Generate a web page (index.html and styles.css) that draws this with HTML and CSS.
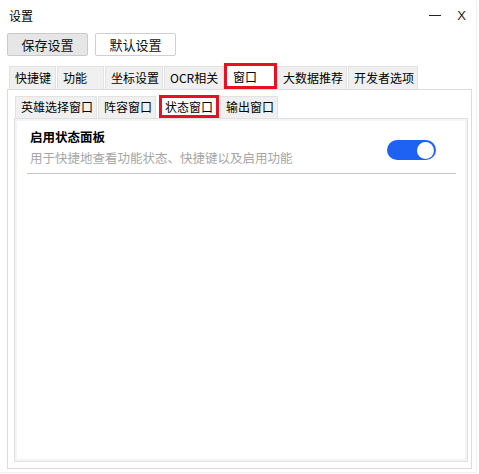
FILE: index.html
```html
<!DOCTYPE html>
<html lang="zh-CN">
<head>
  <meta charset="UTF-8" />
  <title>设置</title>
  <link rel="stylesheet" href="styles.css">
</head>
<body>
  <div class="window">
    <div class="titlebar">
      <span class="title">设置</span>
      <div class="controls">
        <span class="ctl-min"></span>
        <span class="ctl-close">X</span>
      </div>
    </div>

    <div class="toolbar">
      <button type="button" class="btn btn-primary">保存设置</button>
      <button type="button" class="btn">默认设置</button>
    </div>

    <div class="tabs">
      <div class="tab">快捷键</div>
      <div class="tab">功能</div>
      <div class="tab">坐标设置</div>
      <div class="tab tab-wide">OCR相关</div>
      <div class="tab active">窗口</div>
      <div class="tab">大数据推荐</div>
      <div class="tab">开发者选项</div>
    </div>

    <div class="panel">
      <div class="tabs sub-tabs">
        <div class="tab">英雄选择窗口</div>
        <div class="tab">阵容窗口</div>
        <div class="tab active">状态窗口</div>
        <div class="tab">输出窗口</div>
      </div>

      <div class="sub-panel">
        <div class="setting">
          <div class="setting-text">
            <div class="setting-title">启用状态面板</div>
            <div class="setting-desc">用于快捷地查看功能状态、快捷键以及启用功能</div>
          </div>
          <div class="switch on"><span class="knob"></span></div>
        </div>
      </div>
    </div>
  </div>
</body>
</html>
```

FILE: styles.css
```css
* {
  box-sizing: border-box;
}
body {
  margin: 0;
  background: #fff;
  font-family: "Noto Sans CJK SC", "Noto Sans", sans-serif;
  font-size: 12px;
  color: #000;
}
.window {
  width: 477px;
  height: 473px;
  background: #fff;
  border-right: 1px solid #f0f0f0;
  border-bottom: 1px solid #f0f0f0;
}
.titlebar {
  height: 30px;
  display: flex;
  align-items: center;
  justify-content: space-between;
  padding: 0 10px 0 9px;
}
.title {
  font-size: 12px;
}
.controls {
  display: flex;
  align-items: center;
  gap: 16px;
}
.ctl-min {
  width: 12px;
  height: 1px;
  background: #222;
}
.ctl-close {
  font-family: "Liberation Sans", sans-serif;
  font-size: 13px;
  color: #222;
}
.toolbar {
  display: flex;
  gap: 7px;
  padding: 3px 7px 0;
}
.btn {
  width: 81px;
  height: 23px;
  font-family: inherit;
  font-size: 13px;
  background: #fff;
  border: 1px solid #cfcfcf;
  border-radius: 2px;
  color: #111;
  padding: 0;
}
.btn-primary {
  background: #e6e6e6;
  border-color: #cacaca;
}
.tabs {
  display: flex;
  align-items: flex-end;
  height: 32px;
  padding: 0 0 0 9px;
  margin-top: 1px;
}
.tab {
  height: 23px;
  line-height: 21px;
  min-width: 47px;
  padding: 0 3px 0 5px;
  background: #f0f0f0;
  border: 1px solid #e2e2e2;
  border-bottom: none;
  margin-right: 1px;
  white-space: nowrap;
}
.tab-wide {
  min-width: 60px;
}
.tab.active {
  height: 26px;
  line-height: 22px;
  min-width: 53px;
  margin: 0 0 0 -1px;
  padding: 0 4px 0 6px;
  background: #fff;
  border: 3px solid #e81123;
  position: relative;
  z-index: 1;
}
.panel {
  margin: 0 4px 0 7px;
  height: 380px;
  border: 1px solid #dcdcdc;
  padding: 0 3px 6px 6px;
  display: flex;
  flex-direction: column;
}
.sub-tabs {
  height: 28px;
  padding-left: 1px;
  margin-top: 0;
}
.sub-tabs .tab {
  height: 22px;
  line-height: 20px;
  padding: 0 3px 0 5px;
}
.sub-tabs .tab.active {
  height: 23px;
  line-height: 17px;
  min-width: 60px;
  margin: 0 1px 0 2px;
  padding: 0 3px;
}
.sub-panel {
  flex: 1;
  border: 1px solid #e0e0e0;
  box-shadow: inset 0 0 0 2px #f4f4f4;
  background: #fff;
  padding: 0 11px 0 12px;
}
.setting {
  display: flex;
  align-items: center;
  justify-content: space-between;
  padding: 8px 20px 4px 3px;
  border-bottom: 1px solid #c4c4c4;
}
.setting-title {
  font-size: 12.5px;
  font-weight: bold;
  line-height: 20px;
}
.setting-desc {
  font-size: 12.5px;
  color: #a6a6a6;
  line-height: 22px;
}
.switch {
  width: 49px;
  height: 20px;
  border-radius: 10px;
  background: #c8c8c8;
  display: flex;
  align-items: center;
  padding: 0 2px;
  margin-top: 4px;
}
.switch.on {
  background: #1e62f4;
  justify-content: flex-end;
}
.knob {
  width: 17px;
  height: 17px;
  border-radius: 50%;
  background: #fff;
}
```
